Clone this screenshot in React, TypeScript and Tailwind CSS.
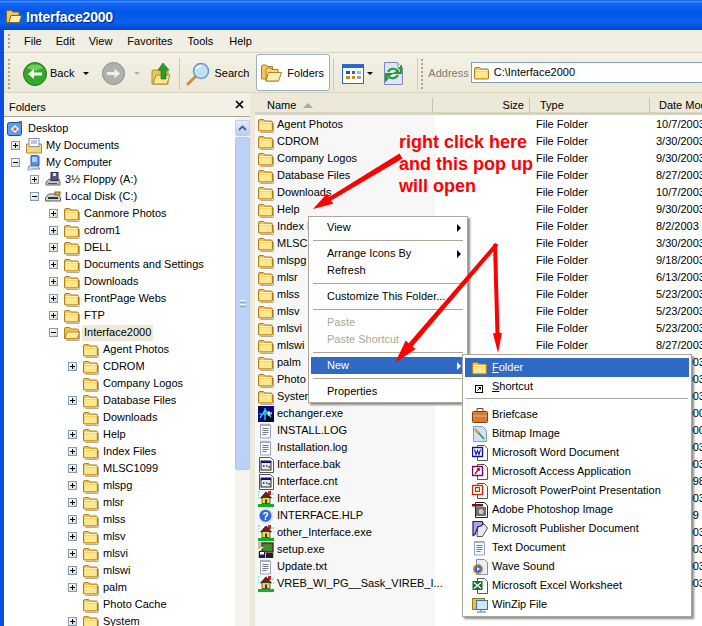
import React from "react";

const F = "[font-family:'Liberation_Sans',Arial,sans-serif]";

function Folder({ open = false, shadow = false }: { open?: boolean; shadow?: boolean }) {
  return (
    <svg width="16" height="16" viewBox="0 0 16 16" className="shrink-0">
      {shadow && <path d="M2.500 15.500h12.500l.5-.5V6" stroke="#9b927a" strokeWidth="1" fill="none" opacity=".75" />}
      <path d="M.5 4Q.5 2.500 2 2.500h3.500L7 4h6Q14.500 4 14.500 5.500V13q0 1-1 1h-12q-1 0-1-1z" fill="#f3c350" stroke="#b27d1c" />
      {open ? (
        <path d="M1 13.500l2.200-6.500h12.300l-2 6.500z" fill="#fdeb9c" stroke="#b27d1c" strokeWidth=".8" />
      ) : (
        <>
          <path d="M1.500 6.500h12v6.500h-12z" fill="#fde88e" />
          <path d="M1.500 5.500h12" stroke="#fff5c4" />
        </>
      )}
    </svg>
  );
}

function TextDoc() {
  return (
    <svg width="16" height="16" viewBox="0 0 16 16" className="shrink-0">
      <path d="M2.500 2h10v13h-10z" fill="#f4f7ff" stroke="#9aa6c6" />
      <path d="M3 .8v2M5 .8v2M7 .8v2M9 .8v2M11 .8v2" stroke="#8a8a8a" />
      <path d="M4.500 5.500h6M4.500 7.500h6M4.500 9.500h6M4.500 11.500h4" stroke="#7a7a7a" />
    </svg>
  );
}

function WinDoc() {
  return (
    <svg width="16" height="16" viewBox="0 0 16 16" className="shrink-0">
      <path d="M1.500.5h11l3 3v12h-14z" fill="#fff" stroke="#555" />
      <rect x="3" y="4" width="10" height="9" fill="#e8e8e8" stroke="#222" />
      <rect x="3" y="4" width="10" height="2" fill="#101080" />
      <path d="M5 9h1.500" stroke="#2a4ad0" strokeWidth="2" />
      <path d="M8 9h1.500" stroke="#1a9a3a" strokeWidth="2" />
      <path d="M10.500 10h1.500" stroke="#c02020" strokeWidth="2" />
    </svg>
  );
}

function House() {
  return (
    <svg width="16" height="16" viewBox="0 0 16 16" className="shrink-0">
      <rect x="0" y="0" width="16" height="16" fill="#fff" />
      <path d="M0 1h2M0 4h1M0 7h1M14 3h2M15 7h1" stroke="#22dddd" />
      <rect x="10" y="0" width="3" height="4" fill="#d02020" />
      <path d="M8 .8L2.500 7h11z" fill="#702020" stroke="#202020" strokeWidth=".7" />
      <rect x="4" y="6.500" width="8" height="6" fill="#f0e020" stroke="#202020" strokeWidth=".7" />
      <rect x="7" y="8.500" width="2" height="4" fill="#2030a0" />
      <rect x="0" y="13" width="16" height="3" fill="#12b020" />
    </svg>
  );
}

function Exch() {
  return (
    <svg width="16" height="16" viewBox="0 0 16 16" className="shrink-0">
      <rect width="16" height="16" fill="#05058a" />
      <rect x="8" y="8" width="8" height="8" fill="#04042a" />
      <rect x="0" y="0" width="6" height="5" fill="#0a0a50" />
      <path d="M2 12l5-8 6 7M1 8h13M7 2v12" stroke="#30e8f0" strokeWidth="1.200" fill="none" />
      <path d="M9 7h5M11 5v5" stroke="#fff" strokeWidth="1.200" />
    </svg>
  );
}

function Help() {
  return (
    <svg width="16" height="16" viewBox="0 0 16 16" className="shrink-0">
      <circle cx="8" cy="8" r="7.500" fill="#dfe3ea" />
      <circle cx="7.500" cy="7.800" r="6" fill="#2f6bd0" />
      <text x="7.500" y="11.500" textAnchor="middle" fontSize="10" fontWeight="700" fill="#fff" fontFamily="Liberation Sans">?</text>
    </svg>
  );
}

function Setup() {
  return (
    <svg width="16" height="16" viewBox="0 0 16 16" className="shrink-0">
      <rect x="0" y="0" width="16" height="16" fill="#c0c0b0" />
      <rect x="4" y="1" width="11" height="9" fill="#707020" stroke="#202010" />
      <rect x="6" y="3" width="7" height="5" fill="#20a040" />
      <path d="M0 9l5-4" stroke="#fff" strokeWidth="1.500" />
      <rect x="1" y="9" width="6" height="7" fill="#1a1a60" />
      <rect x="2" y="10" width="4" height="2.500" fill="#fff" />
      <rect x="8" y="11" width="7" height="5" fill="#202020" />
    </svg>
  );
}

function Sm({ children }: { children: React.ReactNode }) {
  return (
    <svg width="16" height="16" viewBox="0 0 16 16" className="shrink-0">
      {children}
    </svg>
  );
}

function Exp({ open }: { open?: boolean }) {
  return (
    <span className="relative block h-[9px] w-[9px] shrink-0 border border-[#7f9db9] bg-[linear-gradient(135deg,#fff,#dcd8c8)]">
      <span className="absolute left-[1px] top-[3px] h-[1px] w-[5px] bg-black" />
      {!open && <span className="absolute left-[3px] top-[1px] h-[5px] w-[1px] bg-black" />}
    </span>
  );
}

type TreeRow = { t: string; l: 0 | 1 | 2 | 3 | 4; e?: "+" | "-"; i?: React.ReactNode; sel?: boolean };

const treeRows: TreeRow[] = [
  { t: "Desktop", l: 0, i: <Sm><rect x=".5" y="1.500" width="14" height="13" rx="2" fill="#5aa0e8" stroke="#1c4f9a" /><path d="M4 8l4-4 4 4-4 4z" fill="#fff" /><rect x="6.500" y="6.500" width="3" height="3" fill="#e0562a" /><path d="M12 0h3v3h-3z" fill="#e04020" /></Sm> },
  { t: "My Documents", l: 1, e: "+", i: <Sm><path d="M.5 6h15v9h-15z" fill="#f6d67a" stroke="#b98a2c" /><rect x="3" y=".5" width="10" height="8" fill="#fff" stroke="#7f8fb0" /><path d="M5 3h6M5 5h6" stroke="#8090c0" /></Sm> },
  { t: "My Computer", l: 1, e: "-", i: <Sm><path d="M5 .5h7l1 1v9H5z" fill="#5b8fe0" stroke="#3060b0" /><rect x="6" y="2" width="5" height="5" fill="#a9d0fa" /><path d="M3 11h9l2 3H2z" fill="#d8dce8" stroke="#8088a0" /><rect x="1" y="13" width="5" height="3" rx="1" fill="#c8ccd8" /></Sm> },
  { t: "3½ Floppy (A:)", l: 2, e: "+", i: <Sm><path d="M1 10l3-3h10l1 3v3H1z" fill="#c0c0c4" stroke="#707078" /><rect x="6" y=".5" width="7" height="8" fill="#505a80" stroke="#303040" /><rect x="8" y="1" width="3" height="3" fill="#dfe3f0" /><rect x="3" y="11" width="9" height="1" fill="#555" /></Sm> },
  { t: "Local Disk (C:)", l: 2, e: "-", i: <Sm><path d="M.5 9l3-4h9l3 4v3h-15z" fill="#d4d4d4" stroke="#606060" /><path d="M3 9h10" stroke="#333" strokeWidth="2" /><rect x="10" y="3" width="5" height="3" fill="#e8b040" stroke="#806020" /><rect x="2" y="11" width="3" height="1" fill="#30c040" /></Sm> },
  ...["Canmore Photos", "cdrom1", "DELL", "Documents and Settings", "Downloads", "FrontPage Webs", "FTP"].map((t) => ({ t, l: 3 as const, e: "+" as const })),
  { t: "Interface2000", l: 3, e: "-", i: <Folder open shadow />, sel: true },
  { t: "Agent Photos", l: 4 },
  { t: "CDROM", l: 4, e: "+" },
  { t: "Company Logos", l: 4 },
  { t: "Database Files", l: 4, e: "+" },
  { t: "Downloads", l: 4 },
  { t: "Help", l: 4, e: "+" },
  { t: "Index Files", l: 4, e: "+" },
  { t: "MLSC1099", l: 4, e: "+" },
  { t: "mlspg", l: 4, e: "+" },
  { t: "mlsr", l: 4, e: "+" },
  { t: "mlss", l: 4, e: "+" },
  { t: "mlsv", l: 4, e: "+" },
  { t: "mlsvi", l: 4, e: "+" },
  { t: "mlswi", l: 4, e: "+" },
  { t: "palm", l: 4, e: "+" },
  { t: "Photo Cache", l: 4 },
  { t: "System", l: 4, e: "+" },
];

const indent = ["pl-[3px]", "pl-[7px]", "pl-[26px]", "pl-[45px]", "pl-[64px]"];

const listRows: [string, React.ReactNode, string, string][] = [
  ["Agent Photos", null, "File Folder", "10/7/2003"],
  ["CDROM", null, "File Folder", "3/30/2003"],
  ["Company Logos", null, "File Folder", "9/30/2003"],
  ["Database Files", null, "File Folder", "8/27/2003"],
  ["Downloads", null, "File Folder", "10/7/2003"],
  ["Help", null, "File Folder", "9/30/2003"],
  ["Index Files", null, "File Folder", "8/2/2003"],
  ["MLSC1099", null, "File Folder", "3/30/2003"],
  ["mlspg", null, "File Folder", "9/18/2003"],
  ["mlsr", null, "File Folder", "6/13/2003"],
  ["mlss", null, "File Folder", "5/23/2003"],
  ["mlsv", null, "File Folder", "5/23/2003"],
  ["mlsvi", null, "File Folder", "5/23/2003"],
  ["mlswi", null, "File Folder", "8/27/2003"],
  ["palm", null, "File Folder", "5/23/2003"],
  ["Photo Cache", null, "File Folder", "5/23/2003"],
  ["System", null, "File Folder", "5/23/2003"],
  ["echanger.exe", <Exch />, "", "9/18/2000"],
  ["INSTALL.LOG", <TextDoc />, "", "9/18/2000"],
  ["Installation.log", <TextDoc />, "", "9/18/2003"],
  ["Interface.bak", <WinDoc />, "", "5/23/2003"],
  ["Interface.cnt", <WinDoc />, "", "9/18/1998"],
  ["Interface.exe", <House />, "", "5/23/2003"],
  ["INTERFACE.HLP", <Help />, "", "3/13/199"],
  ["other_Interface.exe", <House />, "", "5/23/2003"],
  ["setup.exe", <Setup />, "", "5/23/2003"],
  ["Update.txt", <TextDoc />, "", "5/23/2003"],
  ["VREB_WI_PG__Sask_VIREB_I...", <House />, "", "5/23/2003"],
];

const newItems: [string, React.ReactNode][] = [
  ["Briefcase", <Sm><rect x=".5" y="4.500" width="15" height="11" rx="1" fill="#d87a30" stroke="#804010" /><path d="M5 4.500v-3h6v3" fill="none" stroke="#804010" /><path d="M1 9h14" stroke="#f0b070" /></Sm>],
  ["Bitmap Image", <Sm><path d="M1.500.5h9l4 4v11h-13z" fill="#cfe0f8" stroke="#7f9cc8" /><path d="M3 3l9 10" stroke="#20a040" strokeWidth="1.600" /><path d="M3 3l3 4" stroke="#e0a030" strokeWidth="2.200" /></Sm>],
  ["Microsoft Word Document", <Sm><path d="M5.500.5h7l3 3v12h-10z" fill="#fff" stroke="#555" /><rect x=".5" y="2.500" width="10" height="9" fill="#fff" stroke="#1010a0" strokeWidth="1.400" /><path d="M2.500 4.500l1.500 5 1.500-4 1.500 4 1.500-5" fill="none" stroke="#1010a0" strokeWidth="1.100" /></Sm>],
  ["Microsoft Access Application", <Sm><path d="M5.500.5h7l3 3v12h-10z" fill="#fff" stroke="#555" /><rect x=".5" y="2.500" width="10" height="9" fill="#fff" stroke="#800060" strokeWidth="1.400" /><circle cx="6.500" cy="5.500" r="1.700" fill="#a02020" /><path d="M6 6l-3 4" stroke="#a02020" strokeWidth="1.400" /></Sm>],
  ["Microsoft PowerPoint Presentation", <Sm><path d="M5.500.5h7l3 3v12h-10z" fill="#fff" stroke="#555" /><rect x=".5" y="2.500" width="10" height="9" fill="#fff" stroke="#d02808" strokeWidth="1.400" /><rect x="3.500" y="4.500" width="4" height="4" fill="#f8d8b0" stroke="#d02808" /></Sm>],
  ["Adobe Photoshop Image", <Sm><path d="M3.500.5h9l3 3v12h-12z" fill="#fff" stroke="#222" /><rect x="0" y="2" width="11" height="2.500" fill="#701818" /><rect x="4" y="5" width="10" height="9" fill="#707070" /><circle cx="9" cy="9.500" r="2.500" fill="#c8c8c8" /></Sm>],
  ["Microsoft Publisher Document", <Sm><path d="M6 3h6l3.500 4-5 8.500H5z" fill="#e8e8f0" stroke="#555" /><path d="M1 .5h9c2 2 0 5-3 5h-1l-3 8-2 1z" fill="#b8a0e8" stroke="#301070" strokeWidth="1.200" /></Sm>],
  ["Text Document", <TextDoc />],
  ["Wave Sound", <Sm><path d="M4.500.5h8l3 3v12h-11z" fill="#e8f0ff" stroke="#7f8fb0" /><circle cx="6" cy="10" r="5" fill="#f08020" /><circle cx="6" cy="10" r="3.500" fill="#2070e0" /><path d="M5 8l3 2-3 2z" fill="#fff" /></Sm>],
  ["Microsoft Excel Worksheet", <Sm><path d="M5.500.5h7l3 3v12h-10z" fill="#fff" stroke="#555" /><rect x=".5" y="3" width="10" height="9" fill="#107030" /><path d="M2 4.500l7 6M9 4.500l-7 6" stroke="#e8f8e8" strokeWidth="1.500" /></Sm>],
  ["WinZip File", <Sm><rect x=".5" y="1.500" width="12" height="11" fill="#f0c030" stroke="#a07810" /><rect x="4.500" y="3.500" width="11" height="9" fill="#cfe8ff" stroke="#3070c0" /><path d="M9 12.500v2M5 15h9" stroke="#3070c0" /></Sm>],
];

function Sep() {
  return <div className="mx-[2px] my-[4px] h-[1px] bg-[#aca899]" />;
}

function CtxItem({ t, sub, off, on }: { t: string; sub?: boolean; off?: boolean; on?: boolean }) {
  return (
    <div className={`relative flex h-[17px] items-center pl-[16px] ${on ? "bg-[#316ac5] text-white" : off ? "text-[#aca899]" : "text-black"}`}>
      {t}
      {sub && (
        <span className={`absolute right-[4px] top-[5px] h-0 w-0 border-y-[4px] border-l-[4px] border-y-transparent ${on ? "border-l-white" : "border-l-black"}`} />
      )}
    </div>
  );
}

function arrow(x1: number, y1: number, x2: number, y2: number, w0: number, w1: number, hl: number, hw: number) {
  const dx = x2 - x1;
  const dy = y2 - y1;
  const len = Math.hypot(dx, dy);
  const ux = dx / len;
  const uy = dy / len;
  const px = -uy;
  const py = ux;
  const bx = x2 - ux * hl;
  const by = y2 - uy * hl;
  const pt = (x: number, y: number, k: number) => `${x + px * k},${y + py * k}`;
  return [pt(x1, y1, w0 / 2), pt(bx, by, w1 / 2), pt(bx, by, hw / 2), `${x2},${y2}`, pt(bx, by, -hw / 2), pt(bx, by, -w1 / 2), pt(x1, y1, -w0 / 2)].join(" ");
}

function ToolSep({ className }: { className: string }) {
  return <span className={`h-[32px] w-[1px] shrink-0 bg-[#cdcab8] ${className}`} />;
}

function Grip({ className }: { className: string }) {
  return <span className={`shrink-0 border-l-2 border-dotted border-[#a8a590] ${className}`} />;
}

export default function App() {
  return (
    <div className={`relative flex h-[626px] w-[702px] flex-col overflow-hidden bg-[#ece9d8] text-[11px] leading-none text-black ${F}`}>
      {/* title bar */}
      <div className="flex h-[30px] shrink-0 items-center bg-[linear-gradient(#0a58e0_0,#3b8cff_5%,#1468f0_12%,#0055e5_40%,#0a62ee_75%,#0044cc_100%)] pl-[6px] pt-[3px]">
        <svg width="16" height="15" viewBox="0 0 16 15">
          <path d="M.5 13.500V2.500l1-1h4l1.500 1.500h6v10.500z" fill="#f0c860" stroke="#80602a" />
          <path d="M3 13.500l2-7h10.500l-2 7z" fill="#fff0b0" stroke="#80602a" />
        </svg>
        <span className="ml-[4px] text-[14px] font-bold tracking-[-0.2px] text-white [text-shadow:1px_1px_1px_#00208a]">Interface2000</span>
      </div>

      <div className="flex min-h-0 flex-1 border-l-4 border-l-[#0a50e0]">
        <div className="flex min-w-0 flex-1 flex-col">
          {/* menu bar */}
          <div className="flex h-[23px] shrink-0 items-center border-b border-b-[#d8d4c0] bg-[#f1efe3] pl-[4px]">
            <Grip className="h-[14px]" />
            <span className="ml-[14px]">File</span>
            <span className="ml-[14px]">Edit</span>
            <span className="ml-[14px]">View</span>
            <span className="ml-[15px]">Favorites</span>
            <span className="ml-[15px]">Tools</span>
            <span className="ml-[16px]">Help</span>
          </div>

          {/* toolbar */}
          <div className="flex h-[40px] shrink-0 items-center border-b border-b-[#d8d4c0] bg-[linear-gradient(#f3f1e6,#ece9d8)] pl-[4px] pt-[2px]">
            <Grip className="h-[30px]" />
            <svg width="24" height="24" viewBox="0 0 24 24" className="ml-[13px] shrink-0">
              <circle cx="12" cy="12" r="11.500" fill="#34a82a" stroke="#1c7a18" />
              <path d="M4 6a11 11 0 0 1 16 0l-8 3z" fill="#8fe06a" opacity=".7" />
              <path d="M19 10.500h-8V7l-6 5 6 5v-3.500h8z" fill="#fff" />
            </svg>
            <span className="ml-[3px]">Back</span>
            <span className="ml-[9px] h-0 w-0 border-x-[3px] border-t-[3px] border-x-transparent border-t-black" />
            <svg width="23" height="23" viewBox="0 0 24 24" className="ml-[13px] shrink-0">
              <circle cx="12" cy="12" r="11.500" fill="#b0b0ae" stroke="#8c8c8a" />
              <path d="M5 10.500h8V7l6 5-6 5v-3.500H5z" fill="#f0f0ee" />
            </svg>
            <span className="ml-[9px] h-0 w-0 border-x-[3px] border-t-[3px] border-x-transparent border-t-[#b0b0a8]" />
            <svg width="20" height="24" viewBox="0 0 20 24" className="ml-[11px] shrink-0">
              <path d="M1 22V9l1-1h5l1 1h9v13z" fill="#f0c850" stroke="#b08a30" />
              <path d="M2 22l3-9h14l-3 9z" fill="#fde590" stroke="#b08a30" />
              <path d="M12 1l6 7h-3v9h-5V8H7z" fill="#22a02a" stroke="#186a1c" strokeWidth=".6" />
            </svg>
            <ToolSep className="ml-[8px]" />
            <svg width="24" height="24" viewBox="0 0 24 24" className="ml-[6px] shrink-0">
              <path d="M10 14L2 22" stroke="#d08a40" strokeWidth="3" strokeLinecap="round" />
              <circle cx="15" cy="9" r="7.500" fill="#bfe0fa" stroke="#6d97c0" strokeWidth="1.500" />
              <path d="M10 7a6 6 0 0 1 5-3" stroke="#fff" strokeWidth="1.500" fill="none" />
            </svg>
            <span className="ml-[4px]">Search</span>
            <div className="-mt-[2px] ml-[7px] flex h-[37px] w-[74px] shrink-0 items-center rounded-[3px] border border-[#9db0c4] bg-white pl-[4px]">
              <svg width="21" height="20" viewBox="0 0 21 20" className="shrink-0">
                <path d="M.5 16V3l1-1h4l1 1.500h5V16z" fill="#f2c85c" stroke="#a88030" />
                <path d="M5 18V6l1-1h4l1 1.500h6V18z" fill="#f6d674" stroke="#a88030" />
                <path d="M5 18l2.500-8.500h13l-3 8.500z" fill="#fdeeae" stroke="#a88030" />
              </svg>
              <span className="ml-[5px] mt-[2px]">Folders</span>
            </div>
            <ToolSep className="ml-[3px]" />
            <svg width="22" height="20" viewBox="0 0 22 20" className="ml-[8px] shrink-0">
              <rect x=".5" y=".5" width="21" height="19" fill="#fff" stroke="#2a6ad0" />
              <rect x="1" y="1" width="20" height="3" fill="#2a6ad0" />
              <path d="M4 7h4v3H4z" fill="#2050b0" />
              <path d="M10 7h3v3h-3z" fill="#2a6ad0" />
              <path d="M15 7h4v3h-4z" fill="#a0b8d8" />
              <path d="M4 12h4v3H4z" fill="#d08030" />
              <path d="M10 12h3v3h-3z" fill="#c09020" />
              <path d="M15 12h4v3h-4z" fill="#a0a0a0" />
            </svg>
            <span className="ml-[3px] h-0 w-0 border-x-[3px] border-t-[3px] border-x-transparent border-t-black" />
            <svg width="19" height="23" viewBox="0 0 19 23" className="ml-[11px] shrink-0">
              <path d="M.5.5h13l5 5v17H.5z" fill="#dfe4f8" stroke="#7f86c0" />
              <path d="M14 1v5h4" fill="#fff" stroke="#7f86c0" />
              <path d="M4 10a6 6 0 0 1 10-1l-3 2h6V5l-2 2" fill="none" stroke="#1fa02a" strokeWidth="2" />
              <path d="M14 13a6 6 0 0 1-10 1l3-2H2v6l2-2" fill="none" stroke="#1fa02a" strokeWidth="2" />
            </svg>
            <ToolSep className="ml-[14px]" />
            <Grip className="ml-[3px] h-[30px]" />
            <span className="ml-[5px] text-[#7f7c73]">Address</span>
            <div className="-mt-[2px] ml-[2px] flex h-[21px] min-w-0 flex-1 items-center border border-r-0 border-[#7f9db9] bg-white pl-[2px]">
              <Folder />
              <span className="ml-[4px]">C:\Interface2000</span>
            </div>
          </div>

          {/* main */}
          <div className="flex min-h-0 flex-1">
            {/* folders pane */}
            <div className="flex w-[246px] shrink-0 flex-col">
              <div className="flex h-[24px] shrink-0 items-center justify-between border-b border-b-[#aca899] bg-[#f3f1e6] pl-[5px] pr-[6px]">
                <span className="mt-[6px]">Folders</span>
                <svg width="9" height="9" viewBox="0 0 9 9">
                  <path d="M1 1l7 7M8 1l-7 7" stroke="#000" strokeWidth="1.700" />
                </svg>
              </div>
              <div className="flex min-h-0 flex-1 bg-white">
                <div className="min-w-0 flex-1 overflow-hidden pt-[3px]">
                  {treeRows.map((r, i) => (
                    <div key={i} className={`flex h-[17px] items-center whitespace-nowrap ${indent[r.l]}`}>
                      {r.l > 0 && (r.e ? <Exp open={r.e === "-"} /> : <span className="h-[9px] w-[9px] shrink-0" />)}
                      <span className={r.l > 0 ? "ml-[6px] shrink-0" : "shrink-0"}>{r.i ?? <Folder shadow />}</span>
                      <span className={`ml-[2px] flex h-[16px] items-center px-[2px] ${r.l === 0 ? "ml-[3px]" : ""} ${r.sel ? "bg-[#ece9d8]" : ""}`}>{r.t}</span>
                    </div>
                  ))}
                </div>
                <div className="flex w-[15px] shrink-0 flex-col bg-[#f4f3ee] pt-[3px]">
                  <div className="flex h-[16px] items-center justify-center rounded-[2px] border border-[#bcd0f5] bg-[linear-gradient(#e4ecfd,#b8ccf6)]">
                    <svg width="9" height="6" viewBox="0 0 9 6">
                      <path d="M1 5l3.500-3.500L8 5" fill="none" stroke="#4d6185" strokeWidth="1.800" />
                    </svg>
                  </div>
                  <div className="mt-[1px] flex h-[333px] flex-col items-center justify-center gap-[1px] rounded-[2px] border border-[#b4c8f3] bg-[#bcd0f8]">
                    <span className="h-[1px] w-[6px] bg-[#eef3fe]" />
                    <span className="h-[1px] w-[6px] bg-[#8aa4dc]" />
                    <span className="h-[1px] w-[6px] bg-[#eef3fe]" />
                    <span className="h-[1px] w-[6px] bg-[#8aa4dc]" />
                  </div>
                </div>
              </div>
            </div>

            <div className="w-[5px] shrink-0 bg-[#ece9d8]" />

            {/* list pane */}
            <div className="flex min-w-0 flex-1 flex-col bg-white">
              <div className="flex h-[22px] shrink-0 items-center border-b-[3px] border-b-[#d6d2c0] bg-[#ece9d8] pt-[5px]">
                <div className="flex h-[15px] w-[178px] shrink-0 items-center border-r border-r-[#c7c5b2] pl-[12px]">
                  Name
                  <span className="ml-[7px] h-0 w-0 border-x-[5px] border-b-[5px] border-x-transparent border-b-[#aca899]" />
                </div>
                <div className="flex h-[15px] w-[97px] shrink-0 items-center justify-end border-r border-r-[#c7c5b2] pr-[5px]">Size</div>
                <div className="flex h-[15px] w-[120px] shrink-0 items-center border-r border-r-[#c7c5b2] pl-[10px]">Type</div>
                <div className="whitespace-nowrap pl-[9px]">Date Modified</div>
              </div>
              <div className="min-h-0 flex-1 overflow-hidden bg-[linear-gradient(90deg,#f7f7f7_180px,#fff_180px)] pt-[1px]">
                {listRows.map(([n, ic, type, date], i) => (
                  <div key={i} className="flex h-[17px] items-center whitespace-nowrap">
                    <div className="flex w-[178px] shrink-0 items-center pl-[3px]">
                      {ic ?? <Folder shadow />}
                      <span className="ml-[3px]">{n}</span>
                    </div>
                    <div className="w-[103px] shrink-0" />
                    <div className="w-[120px] shrink-0">{type}</div>
                    <div>{date}</div>
                  </div>
                ))}
              </div>
            </div>
          </div>
        </div>
      </div>

      {/* annotation */}
      <div className="absolute left-[399px] top-[131px] text-[18px] font-bold leading-[22px] text-[#ff0000]">
        right click here
        <br />
        and this pop up
        <br />
        will open
      </div>

      {/* first context menu */}
      <div className="absolute left-[308px] top-[216px] w-[160px] border border-[#aca899] bg-white p-[2px] shadow-[2px_2px_2px_rgba(0,0,0,0.45)]">
        <CtxItem t="View" sub />
        <Sep />
        <CtxItem t="Arrange Icons By" sub />
        <CtxItem t="Refresh" />
        <Sep />
        <CtxItem t="Customize This Folder..." />
        <Sep />
        <CtxItem t="Paste" off />
        <CtxItem t="Paste Shortcut" off />
        <Sep />
        <CtxItem t="New" sub on />
        <Sep />
        <CtxItem t="Properties" />
      </div>

      {/* New submenu */}
      <div className="absolute left-[462px] top-[354px] w-[230px] border border-[#aca899] bg-white px-[2px] pb-[2px] pt-[3px] shadow-[2px_2px_2px_rgba(0,0,0,0.45)]">
        <div className="flex h-[19px] items-center bg-[#316ac5] pl-[7px] text-white">
          <Folder />
          <span className="ml-[4px]"><span className="underline">F</span>older</span>
        </div>
        <div className="flex h-[19px] items-center pl-[7px]">
          <Sm>
            <rect x="3.500" y="6.500" width="7" height="7" fill="#fff" stroke="#000" />
            <path d="M5.500 11.500l3-3M6.500 8.500h2v2" fill="none" stroke="#000" />
          </Sm>
          <span className="ml-[4px]"><span className="underline">S</span>hortcut</span>
        </div>
        <div className="mx-[1px] mb-[6px] mt-[2px] h-[1px] bg-[#aca899]" />
        {newItems.map(([t, ic]) => (
          <div key={t} className="flex h-[19px] items-center pl-[7px]">
            {ic}
            <span className="ml-[4px] whitespace-nowrap">{t}</span>
          </div>
        ))}
      </div>

      {/* red arrows */}
      <svg width="702" height="626" viewBox="0 0 702 626" className="pointer-events-none absolute left-0 top-0">
        <polygon points={arrow(401, 156, 313, 209, 6, 4, 20, 12)} fill="#ff0000" />
        <polygon points={arrow(497, 244, 395, 363, 4, 5, 24, 13)} fill="#ff0000" />
        <polygon points={arrow(495, 244, 498, 353, 4, 4, 20, 9)} fill="#ff0000" />
      </svg>
    </div>
  );
}
